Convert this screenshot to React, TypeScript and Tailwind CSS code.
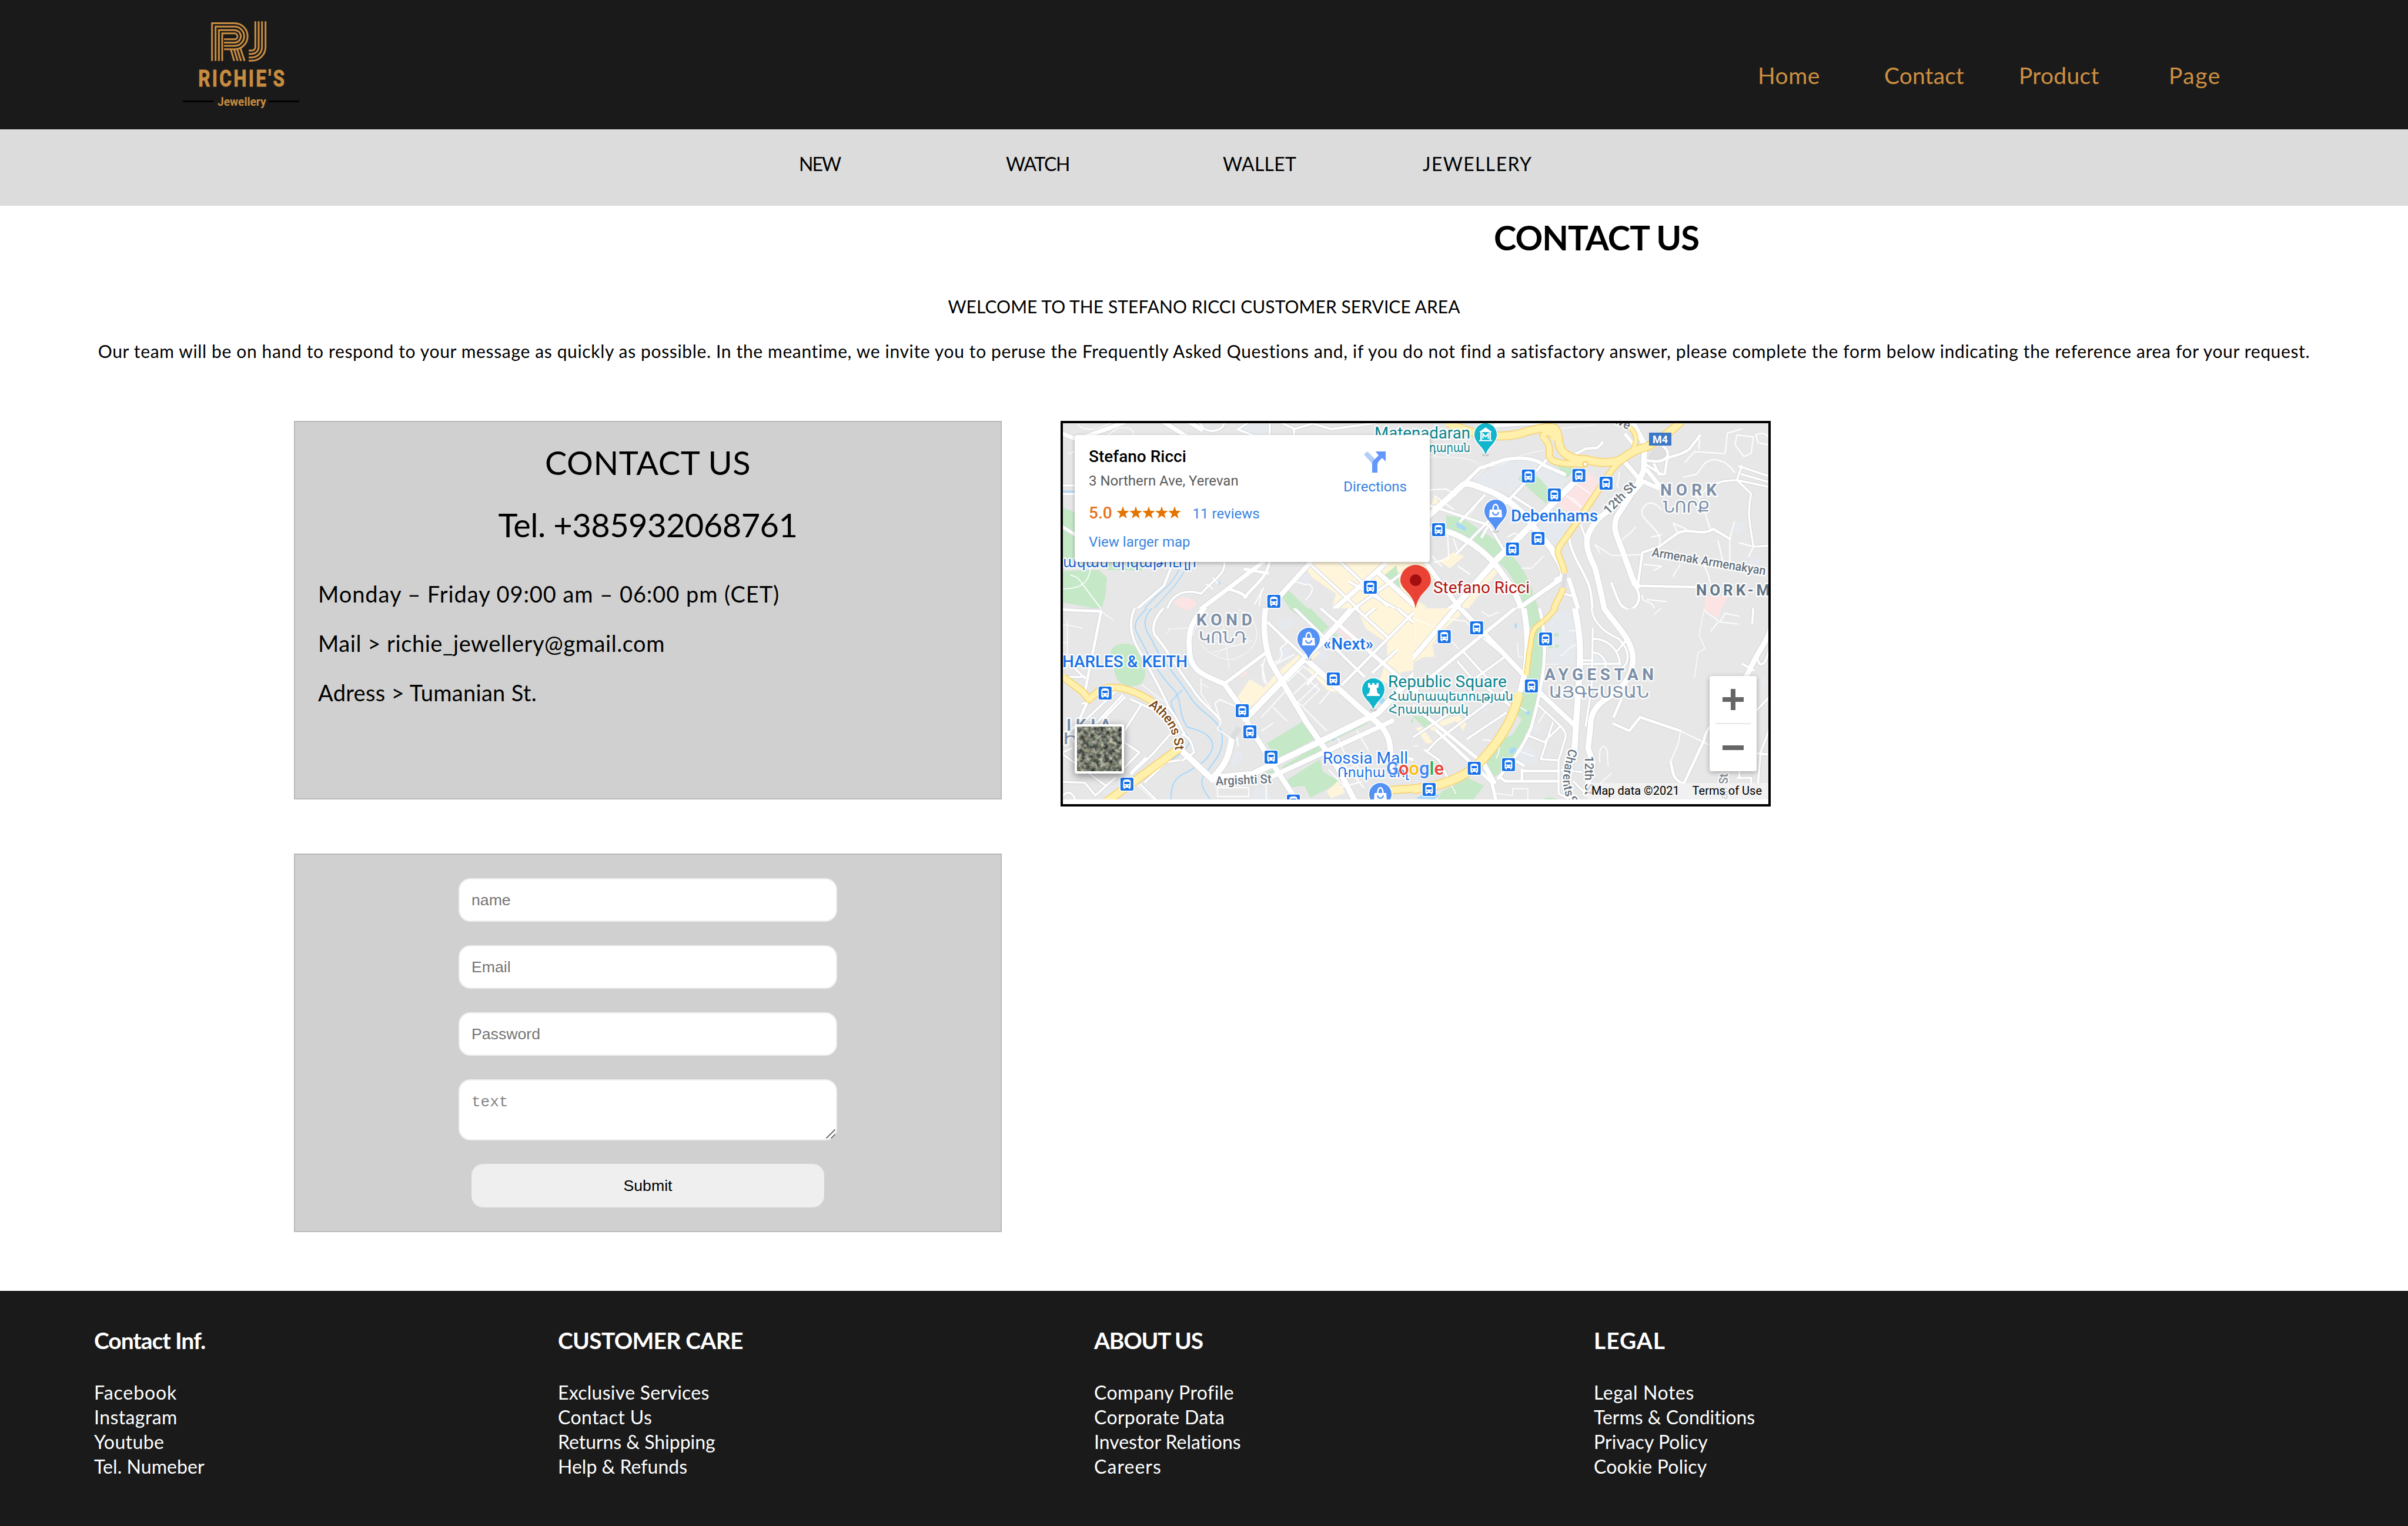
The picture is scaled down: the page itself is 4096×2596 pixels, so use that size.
import React from "react";

/* ---------- Brand ---------- */

function Logo() {
  return (
    <svg className="h-[220px] w-[260px] shrink-0" viewBox="0 0 780 660">
      <g fill="none" stroke="#c88c40" strokeWidth="9">
        <path d="M242,311 V118.500 H357 a66.500,66.500 0 0 1 0,133 H303" />
        <path d="M260,311 V136 H357 a49,49 0 0 1 0,98 H303" />
        <path d="M277,311 V153.500 H357 a32,32 0 0 1 0,64 H303" />
        <path d="M294,311 V170.500 H357 a15,15 0 0 1 0,30 H303" />
        <path d="M338,252 L355,311 M355,252 L373,311 M371,252 L390,311 M387,247 L408,311" />
        <path d="M463,109 V240 a18,18 0 0 1 -18,18 H429" />
        <path d="M480,109 V240 a35,35 0 0 1 -35,35 H429" />
        <path d="M497,109 V240 a53,53 0 0 1 -53,53 H429" />
        <path d="M515,109 V240 a70,70 0 0 1 -70,70 H429" />
      </g>
      <g stroke="#000" strokeWidth="8">
        <path d="M93,517 H250 M530,517 H687" />
      </g>
      <g fill="#c88c40" className="font-['Roboto',sans-serif] font-bold">
        <text x="172" y="442" fontSize="116" letterSpacing="12" textLength="450" lengthAdjust="spacingAndGlyphs" stroke="#c88c40" strokeWidth="3">RICHIE'S</text>
        <text x="270" y="541" fontSize="61" textLength="248" lengthAdjust="spacingAndGlyphs">Jewellery</text>
      </g>
    </svg>
  );
}

function Header() {
  return (
    <header className="flex h-[220px] bg-[#1a1a1a] pl-[280px]">
      <Logo />
      <nav className="ml-[2450px] flex pt-[104px] text-[39px] leading-[48px] text-[#cd8f41]">
        <a className="w-[215px] tracking-[0.45px]">Home</a>
        <a className="w-[229px] tracking-[0.1px]">Contact</a>
        <a className="w-[255px] tracking-[0.27px]">Product</a>
        <a className="tracking-[1.5px]">Page</a>
      </nav>
    </header>
  );
}

function CategoryBar() {
  return (
    <nav className="flex h-[130px] bg-[#dcdcdc] pt-[39px] pl-[1359px] text-[32px] leading-[40px]">
      <a className="w-[352px] tracking-[-2px]">NEW</a>
      <a className="w-[369px] tracking-[-1.35px]">WATCH</a>
      <a className="w-[340px] tracking-[0.25px]">WALLET</a>
      <a className="tracking-[1.36px]">JEWELLERY</a>
    </nav>
  );
}

/* ---------- Map ---------- */

type Quad = { origin: string; clip: [number, number, number, number]; at: (x: number, y: number) => [number, number] };

const KX1 = 620 / 1568;
const KX2 = 630 / 1568;
const NW: Quad = { origin: `matrix(${KX1} 0 0 0.33333 -18 -20)`, clip: [0, 0, 596, 315], at: (x, y) => [x * KX1 - 18, y / 3 - 20] };
const NE: Quad = { origin: `matrix(${KX2} 0 0 0.33333 592 -20)`, clip: [596, 0, 604, 315], at: (x, y) => [x * KX2 + 592, y / 3 - 20] };
const SW: Quad = { origin: `matrix(${KX1} 0 0 0.33333 -18 310)`, clip: [0, 315, 596, 325], at: (x, y) => [x * KX1 - 18, y / 3 + 310] };
const SE: Quad = { origin: `matrix(${KX2} 0 0 0.33333 592 310)`, clip: [596, 315, 604, 325], at: (x, y) => [x * KX2 + 592, y / 3 + 310] };

type Sheet = { q: Quad; areas: [string, string][]; water?: [string, number][]; roads: [string, number][]; highways: [string, number][] };

const GREEN = "#c5e8c6";
const SAND = "#fef5da";
const PINK = "#fce4e4";
const STEEL = "#e6eaee";
const POND = "#a6d8fc";

const sheets: Sheet[] = [
  {
    q: NW,
    areas: [
      [STEEL, "M840,60 H935 V120 H815 L800,92Z M620,70 L680,60 L670,100Z M1045,860 L1085,825 L1125,855 L1075,895Z"],
      [GREEN, "M46,490 L100,515 V700 L135,768 H46Z M46,815 L200,808 L235,850 L230,930 L212,1010 L46,975Z M230,768 H400 L385,812 L235,808Z"],
      [SAND, "M1130,768 H1568 V1020 H1200 L1220,930 L1120,850 L1090,800Z"],
      [GREEN, "M985,940 L1010,905 L1110,1020 H1030Z M1430,835 L1480,785 L1500,905Z"],
      [PINK, "M525,965 L560,948 L610,960 L622,990 L573,1012 L532,990Z"],
      [POND, "M710,875 L718,866 L723,878 L716,888Z"],
    ],
    water: [
      ["M545,805 C520,870 490,900 450,940 L385,1020 M575,800 C545,870 510,910 480,950 L425,1022", 1.6],
      ["M46,408 H100", 2.5],
    ],
    roads: [
      ["M110,62 C120,95 180,100 220,75 L250,60 M240,120 L280,85 C330,75 360,95 345,120 M70,215 L96,205 M46,905 C120,905 155,880 165,800", 1.4],
      ["M80,835 C90,840 105,845 110,850 L212,1010 M690,850 L715,880 M660,880 L690,905 M1010,895 C1060,840 1080,900 1100,880 C1130,890 1120,930 1090,960 M910,900 L870,985 M900,910 L890,990 M720,770 L750,760", 1.8],
      ["M635,60 L650,85 C680,110 730,100 740,60 M800,90 L840,60 M800,92 L860,120 M935,60 V120 M990,60 L1040,88 V120 M1040,90 L1120,62 L1200,90 L1390,60", 2.5],
      ["M46,378 H98 M46,422 H98 M46,1015 L212,1010 M740,770 C745,830 700,850 640,930 C600,915 520,900 490,1022", 2.5],
      ["M46,590 L100,630 M830,805 L925,825 M755,905 C800,920 825,930 830,950 C850,900 915,870 935,768", 3.5],
      ["M520,768 L480,890 L350,1022 M1110,780 L1330,1022 M1240,768 L1440,990 M1280,870 L1500,1022 M1500,830 L1280,1022", 3],
      ["M46,115 L110,145 M150,125 L305,58 M480,55 L575,125 M590,55 L640,90", 5],
      ["M905,770 L755,905 L625,1020", 5],
      ["M1110,770 L965,960 L920,1025 M1430,780 L1200,1022 M1400,820 L1568,1000", 5.5],
    ],
    highways: [],
  },
  {
    q: NE,
    areas: [
      [STEEL, "M270,345 L400,250 V400 H290Z M400,245 L540,240 L520,330 L410,420Z M560,240 L660,345 L620,430 L530,330Z M530,590 L650,520 L690,590 L600,690Z M410,450 L490,500 L450,540Z M1380,560 L1410,570 L1400,620 L1370,615Z M1440,740 L1480,750 L1470,790 L1430,780Z"],
      [GREEN, "M620,275 L700,290 L660,340Z M455,345 C460,315 500,315 540,335 L610,430 L570,470Z M150,530 L220,545 L400,690 L440,755 C490,810 510,900 545,1022 H482 C470,930 430,840 390,790 L350,750 L260,650 L150,600Z"],
      [POND, "M190,565 L230,588 L235,612 L195,590Z"],
      [PINK, "M625,470 L735,305 C790,320 800,370 785,410 L710,515 L640,500Z M1250,945 L1345,940 L1310,1022 H1243Z"],
      [SAND, "M185,715 L225,740 L165,800 L120,765Z M330,770 L380,800 L240,1010 L195,990Z M0,768 H60 L100,850 L60,900Z M0,950 L60,990 L80,1022 H0Z M100,430 L130,480 L80,500Z"],
      ["#dedede", "M1000,245 C1010,200 1050,160 1085,185 C1100,230 1060,275 1005,270Z"],
    ],
    roads: [
      ["M80,230 C150,240 250,220 300,280 C400,290 420,220 560,200 M620,90 C680,80 730,75 780,70 M270,340 L350,250 M310,430 L240,540", 1],
      ["M680,440 L720,480 M700,370 L760,420 M660,430 L720,490 M780,680 L850,735 L980,730 M780,680 L800,720 M950,590 C920,640 900,640 890,660 M560,740 L510,800 L470,800 M880,310 C890,340 860,370 880,390 M1120,820 L1140,780", 1.6],
      ["M80,400 L150,395 L190,430 M100,770 L160,750 L155,620 M410,640 L440,620 L470,650 M180,650 L200,720 M90,740 L130,790 M100,430 L180,500 M200,790 L250,830 M1030,1010 C1030,960 970,980 980,940 M1000,960 L1080,970 M1110,840 L1120,820", 2],
      ["M1160,260 L1200,205 L1330,215 L1340,110 L1400,90 M1220,130 V190 M1155,335 L1210,320 L1240,270 C1270,230 1330,240 1370,310 M1200,400 L1240,500 L1270,610 M1280,365 L1210,440 M1380,120 L1450,130 L1440,215 L1410,230 L1372,170Z M1460,120 C1490,100 1515,120 1515,140 M1460,120 L1470,160 L1515,170", 2],
      ["M980,500 C1000,450 1030,460 1060,500 M980,500 C960,560 1080,600 1050,690 M1130,620 L1110,570 L1165,600 M1350,650 L1370,560 M1240,780 L1260,840 L1280,940 M1350,650 L1350,790 M1020,640 L1060,630 M985,780 L1060,790 L1030,810 M1300,660 L1320,760 M1450,690 L1390,670 M1450,690 L1430,740", 2],
      ["M1380,350 L1440,420 C1420,530 1440,600 1450,690 L1515,685 M1390,280 L1515,330 M1380,350 L1515,385 M1380,350 L1400,280 M1280,380 C1310,350 1340,355 1380,350 M1400,320 L1515,360 M720,580 L750,680 M640,930 L680,940", 2.4],
      ["M1030,270 L1050,320 L1075,320 L1085,240 C1100,225 1150,225 1180,190 L1222,125 M1000,275 L1060,320 M1000,250 C1080,270 1110,220 1070,180 M700,215 L740,190 L790,185 L810,160", 3],
      ["M960,890 L980,720 L1050,690 L1130,620 C1180,590 1230,640 1280,600 L1350,650 M960,890 L1240,897 M940,880 C980,930 970,990 930,1010 C880,1010 875,950 850,880", 3],
      ["M310,430 L210,560 M80,480 L330,580 L390,700 M330,580 L300,640 M580,240 L400,470 L190,730 M670,600 C660,700 720,790 740,850 C770,910 765,1000 770,1022 M430,430 L520,500", 3],
      ["M235,355 L290,290 L400,245 C470,230 530,240 565,275 L650,320 M910,120 L950,180", 4],
      ["M360,70 L560,55 M60,768 L210,1010 M450,1010 L640,850", 5],
      ["M670,860 L712,1022 M1000,300 L1060,390 M900,250 L970,350 L1045,390", 5],
      ["M0,615 L210,385 C230,350 280,380 340,410 C420,450 480,520 520,590 L595,700 C620,760 655,800 640,850 L620,860", 7],
      ["M700,350 L360,760 L195,985 L150,1022", 7],
      ["M80,600 C180,600 280,680 350,770 C400,850 450,920 470,1022", 6.5],
      ["M940,60 L990,170 L985,300 L960,370 L870,540 C850,610 880,650 910,760 C930,820 940,880 960,890 M970,370 L940,410 L800,540 C720,640 740,700 780,800 C800,900 820,1000 820,1022", 6.5],
    ],
    highways: [
      ["M880,60 C930,70 960,110 950,160 C945,190 935,210 900,240", 4],
      ["M560,130 C555,100 600,100 605,135 M560,130 C580,160 590,170 585,220 C590,265 640,268 735,268", 6],
      ["M160,60 C200,85 240,100 300,120 C380,130 430,125 470,110 C520,90 600,70 612,90 C630,120 620,170 640,200 C670,240 700,245 740,245 C800,265 850,265 890,245 C930,210 960,190 1000,180 C1060,140 1110,90 1145,50", 8],
      ["M895,245 C850,290 840,320 800,390 C740,500 690,590 640,670 C600,730 640,740 650,825", 5.5],
      ["M645,900 C640,930 610,980 600,1022", 5.5],
    ],
  },
  {
    q: SW,
    areas: [
      [STEEL, "M970,80 L1030,60 L1040,100 L980,130Z M975,230 L1020,210 L1020,260 L970,270Z M1110,230 L1170,220 L1195,270 L1160,290Z M215,950 L290,900 L300,960 L240,990Z M870,940 L920,920 L940,990 H865Z M780,750 L825,740 L815,790 L770,830Z"],
      [GREEN, "M250,240 C260,180 360,180 372,240 C405,300 410,370 380,400 C330,430 280,400 270,350Z M1000,0 H1100 L1190,110 L1160,140Z M920,705 L1080,590 L1128,680 L972,785Z M1160,680 L1340,585 L1358,602 L1178,705Z M985,825 L1140,715 L1158,735 L1000,838Z M1010,890 L1150,785 L1165,850 L1240,900 L1110,982 L1085,920 L1010,930Z M46,0 H210 V8 H46Z M1180,130 L1230,150 L1190,190Z M920,850 L950,838 L955,855 L930,868Z M1540,590 L1568,560 V620Z"],
      [SAND, "M1310,20 L1500,-20 H1568 V330 L1500,340 L1440,300 V190 L1350,120Z M850,375 L910,420 L960,350 L1060,250 L1075,290 L880,500 L810,540 L790,480Z M1110,310 L1230,450 L1180,430 L1100,320Z M1180,950 L1230,895 L1260,955 L1200,985Z M1120,210 L1150,240 L1110,290Z M1430,300 L1500,340 L1480,420 L1410,380Z"],
      [PINK, "M525,-20 H620 V10 L575,25Z M1210,110 L1240,92 L1312,150 L1270,175Z M805,355 L830,330 L842,345 L815,370Z"],
      [POND, "M1422,470 L1450,510 L1430,535 L1405,490Z M1200,680 L1212,668 L1218,680 L1208,694Z"],
    ],
    water: [
      ["M425,-10 C380,50 345,80 360,130 C400,220 440,330 530,440 C560,500 540,550 580,620 C640,640 690,660 690,720 C680,790 620,820 580,850 C520,880 510,920 510,995 M450,-10 C380,60 390,110 430,180 C470,290 540,360 600,480 C640,550 720,580 730,660 C740,760 690,800 650,870 C630,920 660,950 680,995 M510,490 L560,430 M510,490 C520,550 570,650 590,680 C590,760 480,800 440,840 L360,910", 2],
      ["M1225,670 L1330,605", 2],
    ],
    roads: [
      ["M620,100 L600,160 M640,200 C680,260 760,290 790,270 C850,240 880,200 880,140 C870,60 830,30 800,20 M735,90 L760,320 M690,240 L860,180 M690,150 C700,200 760,220 840,190 M500,120 L590,115 M490,145 L505,118 M740,220 L700,260", 1],
      ["M46,190 H66 M68,100 L130,115 M65,80 V310 M46,100 H70 M210,30 L262,75 M385,405 L480,490 M435,990 L360,910 M640,370 V450 L680,520 M640,400 L672,420", 1.4],
      ["M1000,420 L1040,500 M1050,330 L1150,430 M1010,390 L1080,310 L1170,400 M1040,450 L1120,360 M1060,490 L1140,400 M1075,515 L1150,430 M1000,430 L1075,515 M1150,500 L1200,430 L1240,430 M900,570 L1000,440 M950,520 L1010,590 M1080,520 L1180,640 M900,640 L950,600 M920,880 V990 M710,930 H845 V975 H710Z M1310,640 L1360,740 M1230,680 L1270,790", 1.8],
      ["M1190,840 L1310,990 M1240,790 L1340,930 M1330,900 L1240,930 M1260,840 L1310,815 L1350,900 M800,520 L720,480 L700,500 L725,600 L710,630 L770,680 M800,720 L790,640 M930,90 L1010,190 L980,220 C1000,260 980,290 940,290 M960,300 L1040,250 M900,300 L920,400 M915,270 C900,320 900,380 920,400", 2],
      ["M46,265 L140,370 M64,365 H140 M46,750 L80,730 M130,500 L170,490 M46,900 L140,905 L185,970 L270,880 M46,760 L230,920 M380,915 L450,995 M46,970 C70,940 90,960 100,995", 2.4],
      ["M270,440 L130,600 M300,460 L150,650 M310,470 L220,580 M340,480 L430,530 L500,580 M380,510 L310,640 V700 C340,720 360,740 375,750 L300,840 M520,640 L430,760 L340,860 M545,790 L490,800 L400,900 M230,640 L310,700 M560,660 C590,670 600,700 610,750 L560,790 M400,780 L340,850", 2.6],
      ["M1130,-10 L1568,440 M1020,-10 L1340,360 M1230,100 L1568,450 M1250,400 L1568,20 M1310,20 L1440,160 M1350,50 L1400,0 M1470,0 L1568,100 M930,90 L1110,290 M1380,340 L1480,230 M1100,400 L1150,330", 3.2],
      ["M46,22 L210,30 L140,440 M155,480 L110,600 L60,660", 3.2],
      ["M370,-10 C330,40 330,130 360,200 C420,330 470,430 500,520 C540,580 550,620 570,660 M500,-10 C430,60 430,120 440,150 C500,230 540,330 600,420 C640,500 680,520 720,580", 2.8],
      ["M740,400 L915,245 M1455,760 L1568,790", 4],
      ["M950,870 L1460,590", 5.5],
      ["M670,-5 C610,60 580,120 590,220 C590,330 640,350 740,400 L800,500 L850,620 L960,830 L1050,995", 6],
      ["M920,-5 C905,80 910,200 940,290 L1090,590 L1160,710 L1220,810 L1300,995 M1100,285 L1330,530 L1400,600 C1440,640 1455,690 1455,760 V840", 6.5],
      ["M1310,-10 L1180,160 L960,420 L830,580 M770,690 C760,760 750,810 690,880 M555,740 L690,890 M680,880 L860,860 L1160,690 L1400,550 L1568,340", 7],
    ],
    highways: [
      ["M1370,975 C1440,930 1500,945 1580,930", 7.5],
      ["M46,365 L130,440 L158,480 L205,430 C270,400 350,430 430,490", 6.5],
      ["M545,730 L350,900 L235,1000", 8],
    ],
  },
  {
    q: SE,
    areas: [
      [STEEL, "M590,50 L650,25 L700,50 L690,300 H600 L580,200Z M770,250 L800,250 L825,280 L790,310Z M500,600 L550,610 L545,650 L510,640Z M480,690 L540,770 L530,810 L450,800Z M300,490 L330,520 L315,550Z M150,340 L200,330 L195,380Z M690,810 L725,800 V840 L700,850Z M1480,360 L1505,370 L1500,410 L1475,400Z M0,880 H30 V920 H0Z"],
      [GREEN, "M480,-10 H545 L560,80 L570,200 C560,330 540,500 500,620 C470,700 430,790 370,860 L340,890 L300,780 L380,680 L430,660 L470,580 L450,560 L480,400 L505,250 L510,130Z M240,880 L310,920 L260,995 H110 L130,950Z M0,560 L60,570 L95,600 L60,625Z M607,142 H625 V158 H607Z M580,205 H600 V218 H580Z M610,200 H627 V214 H610Z M560,990 C570,975 610,975 625,995Z"],
      [POND, "M487,548 a9,10 0 1 0 18,0 a9,10 0 1 0 -18,0Z M420,730 L440,722 L445,740 L425,760 L416,750Z M20,985 L60,960 L120,965 L100,990Z M440,92 H448 V114 H440Z M76,195 a6,7 0 1 0 12,0 a6,7 0 1 0 -12,0Z"],
      [PINK, "M1245,-10 H1325 L1300,65 L1245,25Z"],
      [SAND, "M0,-10 H90 L205,30 L210,50 L130,130 L90,200 L100,260 L50,265 L0,300Z M70,610 L200,560 L235,600 L222,640 L190,590 L90,640Z M20,625 L45,620 L95,700 L65,705Z"],
    ],
    roads: [
      ["M0,180 H20 V100 M0,60 L100,110 M1245,0 L1220,150 L1245,220 L1215,240 L1200,370 M890,10 L920,20 M450,190 L455,260 L475,265 M670,130 L700,128 M630,255 C660,255 650,220 700,200 M570,300 H620", 1.2],
      ["M120,120 L160,70 L230,80 L270,130 M300,30 L330,55 L370,35 M100,190 L170,180 L200,220 M360,960 L430,970 L430,935 H495 V995 M305,685 C370,690 390,720 360,780 M800,800 C790,700 830,700 832,760 L835,820 M850,855 L800,910 M1030,45 L1058,15 M450,510 L490,540 M450,740 L520,770 M540,600 L570,540 M0,720 L30,715 M150,870 L190,960", 1.6],
      ["M1245,30 L1310,85 L1385,95 M1310,80 L1330,40 L1390,55 M1270,130 L1300,85 M1140,640 L1260,710 M1140,650 C1130,740 1110,750 1100,800", 1.8],
      ["M490,660 L570,700 M540,510 C600,580 660,630 655,670 L625,790 L550,785 L600,600 M570,690 L630,620 M625,790 V960 L680,995 M690,900 L740,960 M640,840 L720,850", 2.4],
      ["M70,740 L110,690 L400,430 M240,680 L400,550 M60,740 L120,790 L155,880 M225,240 L330,380 M0,450 L60,400 M310,170 L400,260 L240,400 M200,290 L250,360 M320,420 L440,530 M0,680 L200,520 M1465,250 C1470,330 1500,310 1515,230 M1405,300 L1450,330 M1450,-5 L1445,90 M1515,470 L1460,540 M1515,640 L1480,750 L1470,900 M1470,755 L1515,760 M1385,880 H1440 V910 M1390,850 V880", 2.6],
      ["M765,-5 C760,60 800,130 880,170 C930,230 930,300 880,330 M770,120 L765,420 L740,610 M770,170 C830,170 880,220 885,300 M770,240 C800,240 825,270 825,310 M725,280 H770 M725,298 H885 M910,180 L875,230", 2.4],
      ["M890,480 L860,565 M860,605 L925,640 L970,570 L1140,640 M1100,800 C1110,860 1110,890 1155,910 L1240,690 C1250,620 1290,590 1350,500 M470,845 H625 M380,880 L400,897 H625 M470,840 V895 M440,790 L475,815", 3.2],
      ["M460,-5 L90,360 M0,500 L300,800 M110,640 L340,900 M340,890 L360,995 M0,410 L50,470", 4],
      ["M1350,500 L1430,340 C1460,250 1500,200 1520,130", 6],
      ["M190,-10 L380,230 L470,345 M0,280 L205,-10 M550,450 L700,620 M300,790 L350,900", 5.5],
      ["M475,-5 C490,100 500,200 485,330 L465,430", 6.5],
      ["M540,-5 C590,200 560,400 510,620 C480,710 430,800 370,880", 3.6],
      ["M690,-5 C720,150 720,250 710,400 L692,740", 7],
      ["M810,-5 C830,60 940,160 940,270 C940,350 910,400 850,460 C790,500 760,540 760,620 L750,730 L770,800 L740,960", 6.5],
    ],
    highways: [
      ["M620,-10 C600,50 560,80 530,110 C505,140 510,200 500,240 L490,350", 4.5],
      ["M455,460 C440,540 400,660 300,790 C230,880 120,930 -20,940", 9],
    ],
  },
];

function Terrain() {
  return (
    <>
      {sheets.map(({ q, areas, water, roads, highways }, i) => (
        <g key={i}>
          <clipPath id={`sheet-${i}`}>
            <rect x={q.clip[0]} y={q.clip[1]} width={q.clip[2]} height={q.clip[3]} />
          </clipPath>
          <g clipPath={`url(#sheet-${i})`}>
            <g transform={q.origin}>
              {areas.map(([fill, d], k) => <path key={k} d={d} fill={fill} />)}
              <g fill="none" strokeLinejoin="round">
                {water?.map(([d, w], k) => <path key={k} d={d} stroke={POND} strokeWidth={w} vectorEffect="non-scaling-stroke" />)}
                {roads.map(([d, w], k) => w > 2 && <path key={k} d={d} stroke="#d3d5da" strokeWidth={w * 1.5 + 2} vectorEffect="non-scaling-stroke" />)}
                {roads.map(([d, w], k) => <path key={k} d={d} stroke="#fff" strokeWidth={w > 2 ? w * 1.5 : w} strokeLinecap="round" vectorEffect="non-scaling-stroke" />)}
                {highways.map(([d, w], k) => <path key={k} d={d} stroke="#f8d06c" strokeWidth={w * 1.5 + 3} vectorEffect="non-scaling-stroke" />)}
                {highways.map(([d, w], k) => <path key={k} d={d} stroke="#fff0ac" strokeWidth={w * 1.5} strokeLinecap="round" vectorEffect="non-scaling-stroke" />)}
              </g>
            </g>
          </g>
        </g>
      ))}
      <circle cx="888.500" cy="69.500" r="4" fill="#fff" stroke="#f8d06c" strokeWidth="2.500" />
      <path d="M300,518 L288,536" stroke="#dcdde0" strokeWidth="10" />
      <path d="M853.500,255 L851,280" stroke="#dcdde0" strokeWidth="7" />
    </>
  );
}

const stops: [number, number][] = [
  NW.at(953, 969), NW.at(1368, 897),
  NE.at(117, 603), NE.at(497, 329), NE.at(607, 426), NE.at(711, 326), NE.at(826, 366), NE.at(538, 648), NE.at(430, 702),
  SW.at(227, 447), SW.at(817, 537), SW.at(850, 645), SW.at(941, 774), SW.at(321, 912), SW.at(1209, 375), SW.at(1037, 998),
  SE.at(141, 159), SE.at(278, 114), SE.at(570, 171), SE.at(510, 411), SE.at(268, 831), SE.at(413, 812), SE.at(77, 939),
];

function BusStop({ x, y }: { x: number; y: number }) {
  return (
    <g transform={`translate(${x - 11} ${y - 11})`}>
      <rect x="-1.500" y="-1.500" width="25" height="25" rx="4" fill="#fff" />
      <rect width="22" height="22" rx="2.500" fill="#1a73e8" />
      <path d="M4.500,17 V6.500 C4.500,3.500 8,3 11,3 S17.500,3.500 17.500,6.500 V17 H16.500 V19 H14 V17 H8 V19 H5.500 V17Z" fill="#fff" />
      <path d="M6.500,7 H15.500 V11 H6.500Z" fill="#1a73e8" />
      <circle cx="7.800" cy="14" r="1.100" fill="#1a73e8" />
      <circle cx="14.200" cy="14" r="1.100" fill="#1a73e8" />
    </g>
  );
}

function PlacePin({ x, y, color, children }: { x: number; y: number; color: string; children: React.ReactNode }) {
  return (
    <g transform={`translate(${x} ${y})`}>
      <ellipse cy="54" rx="6" ry="2" fill="#000" opacity="0.15" />
      <path d="M0,54 C-3,40 -19,34 -19,19 A19,19 0 0 1 19,19 C19,34 3,40 0,54Z" fill={color} stroke="#fff" strokeWidth="3" paintOrder="stroke" />
      {children}
    </g>
  );
}

function ShopPin({ x, y }: { x: number; y: number }) {
  return (
    <PlacePin x={x} y={y} color="#5491f5">
      <path d="M-10,17 H10 L11,30 H-11Z" fill="#fff" />
      <path d="M-4.500,17 C-4.500,5 4.500,5 4.500,17" fill="none" stroke="#fff" strokeWidth="2.500" />
      <path d="M-5,21 C-4,27.500 4,27.500 5,21" fill="none" stroke="#5491f5" strokeWidth="2.200" />
    </PlacePin>
  );
}

type Label = { t: string; x: number; y: number; w: number; s: number; c: string; b?: number; r?: number; o?: number };

const BLUE = "#1a73e8";
const TEAL = "#0c8590";
const SLATE = "#7c8fa8";
const STREET = "#66727e";

const labels: Label[] = [
  { t: "Matenadaran", x: 530, y: 26, w: 163, s: 28, c: TEAL },
  { t: "Մատենադարան", x: 533, y: 49, w: 160, s: 21, c: TEAL },
  { t: "gyan Ave", x: 888, y: -26, w: 82, s: 21, c: STREET, b: 500, r: 27 },
  { t: "NORK", x: 1016, y: 123, w: 96, s: 28, c: SLATE, b: 700 },
  { t: "ՆՈՐՔ", x: 1021, y: 152, w: 79, s: 26, c: SLATE },
  { t: "12th St", x: 928, y: 156, w: 68, s: 21, c: STREET, b: 500, r: -45 },
  { t: "Armenak Armenakyan", x: 1001, y: 226, w: 196, s: 21, c: STREET, b: 500, r: 9.5 },
  { t: "NORK-MARASH", x: 1077, y: 293, w: 236, s: 26, c: "#637689", b: 700 },
  { t: "Debenhams", x: 762, y: 167, w: 148, s: 28, c: BLUE, b: 500 },
  { t: "Stefano Ricci", x: 630, y: 289, w: 164, s: 28, c: "#b31412" },
  { t: "ական երկաթուղի", x: 0, y: 245, w: 227, s: 24, c: "#1967d2" },
  { t: "HARLES & KEITH", x: -1, y: 415, w: 213, s: 28, c: BLUE, b: 500 },
  { t: "KOND", x: 227, y: 344, w: 95, s: 28, c: SLATE, b: 700 },
  { t: "ԿՈՆԴ", x: 231, y: 374, w: 82, s: 26, c: SLATE },
  { t: "«Next»", x: 443, y: 385, w: 85, s: 28, c: BLUE, b: 500 },
  { t: "Republic Square", x: 553, y: 449, w: 202, s: 28, c: TEAL },
  { t: "Հանրապետության", x: 554, y: 472, w: 212, s: 21, c: TEAL },
  { t: "Հրապարակ", x: 554, y: 494, w: 136, s: 21, c: TEAL },
  { t: "AYGESTAN", x: 819, y: 437, w: 186, s: 28, c: SLATE, b: 700 },
  { t: "ԱՅԳԵՍՏԱՆ", x: 827, y: 467, w: 170, s: 26, c: SLATE },
  { t: "Rossia Mall", x: 442, y: 579, w: 145, s: 28, c: BLUE },
  { t: "Ռոսիա մոլ", x: 467, y: 602, w: 121, s: 23, c: BLUE },
  { t: "Argishti St", x: 260, y: 616, w: 95, s: 21, c: STREET, b: 500, r: -2.5 },
  { t: "IKIA", x: 6, y: 523, w: 76, s: 28, c: SLATE, b: 700 },
  { t: "ԿԻԱ", x: -26, y: 546, w: 78, s: 26, c: SLATE },
  { t: "12th St", x: 888, y: 566, w: 66, s: 20, c: STREET, b: 500, r: 90 },
  { t: "an St", x: 1131, y: 640, w: 44, s: 20, c: STREET, b: 500, r: -90, o: 0.8 },
];

function Labels() {
  return (
    <g stroke="#fff" strokeWidth="5" strokeLinejoin="round" paintOrder="stroke" className="font-['Roboto','DejaVu_Sans',sans-serif]">
      {labels.map(({ t, x, y, w, s, c, b, r, o }) => (
        <text key={t + x} transform={`translate(${x} ${y}) rotate(${r ?? 0})`} textLength={w} lengthAdjust={b === 700 ? "spacing" : "spacingAndGlyphs"} fontSize={s} fontWeight={b ?? 400} fill={c} opacity={o ?? 1} strokeOpacity="0.85">{t}</text>
      ))}
      <path id="athens" d="M145,481 C170,498 190,520 191,558" fill="none" stroke="none" />
      <text fontSize="22" fontWeight="500" fill="#7a4510"><textPath href="#athens" textLength="92">Athens St</textPath></text>
      <path id="charents" d="M861,553 C852,585 848,605 853,625 C856,640 862,648 875,660" fill="none" stroke="none" />
      <text fontSize="21" fontWeight="500" fill={STREET}><textPath href="#charents">Charents St</textPath></text>
    </g>
  );
}

function Map() {
  return (
    <svg className="block h-[640px] w-[1200px] bg-[#e7e7e7]" viewBox="0 0 1200 640">
      <Terrain />
      <path d="M997,16 H1035 V38 H997Z" fill="#3c78c6" />
      <text x="1003" y="34" fontSize="19" fill="#fff" textLength="26" lengthAdjust="spacingAndGlyphs" className="font-['Roboto',sans-serif] font-bold">M4</text>
      <Labels />
      {stops.map(([x, y]) => <BusStop key={`${x}-${y}`} x={x} y={y} />)}
      <PlacePin x={719} y={0} color="#12b5cb">
        <path d="M-11,15 L0,7 L11,15Z M-9,15 H-6.500 V29 H-9Z M9,15 H6.500 V29 H9Z M-11,28.500 H11 V30.500 H-11Z" fill="#fff" />
        <path d="M-4.500,26 V18 L0,23 L4.500,18 V26" fill="none" stroke="#fff" strokeWidth="2.200" />
      </PlacePin>
      <ShopPin x={736} y={130} />
      <ShopPin x={418} y={348} />
      <ShopPin x={540} y={612} />
      <PlacePin x={528} y={434} color="#12b5cb">
        <path d="M-9,8 H-5.500 V11 H-2 V8 H2 V11 H5.500 V8 H9 V15 L5.500,17 L7,25 L11,27.500 V30 H-11 V27.500 L-7,25 L-5.500,17 L-9,15Z" fill="#fff" />
      </PlacePin>
      <path d="M600,315 C596,288 574,283 574,267 A26,26 0 0 1 626,267 C626,283 604,288 600,315Z" fill="#ea4335" />
      <circle cx="600" cy="267" r="10" fill="#a50e0e" />
      <text x="550" y="598" fontSize="31" fontWeight="500" stroke="#fff" strokeWidth="3" strokeOpacity="0.7" paintOrder="stroke" textLength="98" lengthAdjust="spacingAndGlyphs" className="font-['Roboto',sans-serif]">
        <tspan fill="#4285f4">G</tspan><tspan fill="#ea4335">o</tspan><tspan fill="#fbbc05">o</tspan><tspan fill="#4285f4">g</tspan><tspan fill="#34a853">l</tspan><tspan fill="#ea4335">e</tspan>
      </text>
    </svg>
  );
}

function Star() {
  return (
    <svg className="h-[22px] w-[22px]" viewBox="0 0 22 22">
      <path d="M11,0.500 L13.700,8 L21.800,8.200 L15.400,13 L17.700,21 L11,16.300 L4.300,21 L6.600,13 L0.200,8.200 L8.300,8Z" fill="#e37400" />
    </svg>
  );
}

function PlaceCard() {
  return (
    <div className="absolute top-[20px] left-[20px] flex h-[216px] w-[604px] justify-between rounded-[4px] bg-white px-6 shadow-[0_2px_6px_rgba(0,0,0,0.3)]">
      <div className="pt-[20px]">
        <div className="text-[28px] leading-[34px] font-medium text-black">Stefano Ricci</div>
        <div className="mt-[10px] text-[24px] leading-[28px] text-[#5b5b5b]">3 Northern Ave, Yerevan</div>
        <div className="mt-[24px] flex h-[34px] items-center">
          <span className="text-[28px] leading-[34px] font-medium text-[#e7711b]">5.0</span>
          <span className="mb-[2px] ml-[7px] flex">
            <Star /><Star /><Star /><Star /><Star />
          </span>
          <span className="mt-[2px] ml-[20px] text-[24px] leading-[28px] text-[#3a84df]">11 reviews</span>
        </div>
        <div className="mt-[18px] text-[24px] leading-[28px] text-[#3a84df]">View larger map</div>
      </div>
      <div className="flex flex-col items-center pt-[26px] pr-[15px]">
        <svg className="h-[40px] w-[38px]" viewBox="0 0 38 40">
          <path d="M0,7 L6,2 L19,15 L15,24Z" fill="#b3cdfb" />
          <path d="M14,38 V23 C14,18 20,14 25,9 L20,2 H37 V19 L31,13 C27,17 23,20 23,25 V38Z" fill="#6596fb" />
        </svg>
        <div className="mt-[8px] text-[24px] leading-[28px] text-[#3a84df]">Directions</div>
      </div>
    </div>
  );
}

function SatelliteToggle() {
  return (
    <div className="absolute top-[512px] left-[20px] h-[84px] w-[84px] rounded-[4px] border-4 border-white bg-[#6f756e] shadow-[0_4px_14px_rgba(0,0,0,0.45)]">
      <svg className="h-full w-full" viewBox="0 0 76 76">
        <filter id="ground" x="0" y="0" width="100%" height="100%" colorInterpolationFilters="sRGB">
          <feTurbulence type="fractalNoise" baseFrequency="0.13" numOctaves="4" seed="7" />
          <feColorMatrix values="1.1 0 0 0 -0.09  1.050 0.100 0 0 -0.1  0.950 0 0.100 0 -0.1  0 0 0 0 1" />
        </filter>
        <rect width="76" height="76" filter="url(#ground)" />
      </svg>
    </div>
  );
}

function ZoomControl() {
  return (
    <div className="absolute top-[430px] left-[1100px] flex h-[162px] w-[80px] flex-col items-center rounded-[4px] bg-white shadow-[0_2px_8px_rgba(0,0,0,0.3)]">
      <svg className="h-[80px] w-[36px]" viewBox="0 0 36 80">
        <path d="M0,36 H14 V22 H22 V36 H36 V44 H22 V58 H14 V44 H0Z" fill="#666" />
      </svg>
      <div className="h-[2px] w-[60px] bg-[#e6e6e6]" />
      <svg className="h-[80px] w-[36px]" viewBox="0 0 36 80">
        <path d="M0,36 H36 V44 H0Z" fill="#666" />
      </svg>
    </div>
  );
}

function MapPanel() {
  return (
    <div className="relative h-[656px] w-[1208px] overflow-hidden border-4 border-black font-['Roboto',sans-serif]">
      <Map />
      <PlaceCard />
      <SatelliteToggle />
      <ZoomControl />
      <div className="absolute top-[612px] left-[892px] flex h-[28px] w-[308px] justify-between bg-[#f5f5f5]/70 pr-[11px] pl-[7px] text-[20px] leading-[27px] text-black">
        <span className="tracking-[0px]">Map data ©2021</span>
        <span className="tracking-[0px]">Terms of Use</span>
      </div>
    </div>
  );
}

/* ---------- Contact details and form ---------- */

function ContactCard() {
  return (
    <section className="h-[644px] w-[1204px] border-2 border-[#b9b9b9] bg-[#d0d0d0] px-[39px] pt-[35px]">
      <h2 className="text-center text-[56px] leading-[68px] tracking-[0.53px]">CONTACT US</h2>
      <p className="mt-[38px] text-center text-[56px] leading-[68px] tracking-[-0.55px]">Tel. +385932068761</p>
      <div className="mt-[61px] flex flex-col gap-[40px] text-[38px] leading-[44px]">
        <p className="tracking-[0.95px]">Monday – Friday 09:00 am – 06:00 pm (CET)</p>
        <p className="tracking-[0.56px]">Mail &gt; richie_jewellery@gmail.com</p>
        <p className="tracking-[0.32px]">Adress &gt; Tumanian St.</p>
      </div>
    </section>
  );
}

const inputClass =
  "h-[74px] w-[644px] rounded-[20px] border-2 border-[#eee] bg-white px-[20px] font-['Liberation_Sans',sans-serif] text-[26.67px] text-black placeholder:text-[#757575] placeholder:opacity-100";

function ContactForm() {
  return (
    <form className="flex h-[644px] w-[1204px] flex-col items-center gap-[40px] border-2 border-[#b9b9b9] bg-[#d0d0d0] pt-[40px]">
      <input className={inputClass} placeholder="name" />
      <input className={inputClass} placeholder="Email" />
      <input className={inputClass} placeholder="Password" />
      <div className="relative h-[104px] w-[644px]">
        <textarea
          className="block h-[104px] w-[644px] resize-none overflow-hidden rounded-[20px] border-2 border-[#eee] bg-white px-[20px] pt-[22px] font-['Liberation_Mono',monospace] text-[26px] leading-[30px] placeholder:text-[#858585] placeholder:opacity-100"
          placeholder="text"
        />
        <svg className="absolute right-[3px] bottom-[3px] h-[16px] w-[16px]" viewBox="0 0 16 16">
          <path d="M0.500,15.500 L15.500,0.500 M8.500,15.500 L15.500,8.500" stroke="#555" strokeWidth="1.600" />
        </svg>
      </div>
      <button className="h-[74px] w-[600px] rounded-[20px] bg-[#efefef] font-['Liberation_Sans',sans-serif] text-[26.67px] text-black">Submit</button>
    </form>
  );
}

/* ---------- Footer ---------- */

type Column = { width: string; title: string; tracking: string; links: [string, string][] };

const columns: Column[] = [
  {
    width: "w-[789px]", title: "Contact Inf.", tracking: "tracking-[-1.06px]",
    links: [["Facebook", "tracking-[0.88px]"], ["Instagram", "tracking-[0.41px]"], ["Youtube", "tracking-[0.39px]"], ["Tel. Numeber", "tracking-[0.07px]"]],
  },
  {
    width: "w-[912px]", title: "CUSTOMER CARE", tracking: "tracking-[-0.74px]",
    links: [["Exclusive Services", "tracking-[0.27px]"], ["Contact Us", "tracking-[0.45px]"], ["Returns & Shipping", "tracking-[-0.04px]"], ["Help & Refunds", "tracking-[0.01px]"]],
  },
  {
    width: "w-[850px]", title: "ABOUT US", tracking: "tracking-[-1.3px]",
    links: [["Company Profile", "tracking-[0.42px]"], ["Corporate Data", "tracking-[0.34px]"], ["Investor Relations", "tracking-[-0.02px]"], ["Careers", "tracking-[1.06px]"]],
  },
  {
    width: "w-[600px]", title: "LEGAL", tracking: "tracking-[0.9px]",
    links: [["Legal Notes", "tracking-[0.6px]"], ["Terms & Conditions", "tracking-[-0.02px]"], ["Privacy Policy", "tracking-[0.05px]"], ["Cookie Policy", "tracking-[0.2px]"]],
  },
];

function Footer() {
  return (
    <footer className="flex h-[400px] bg-[#1a1a1a] pt-[60px] pl-[160px] text-white">
      {columns.map((col) => (
        <div key={col.title} className={col.width}>
          <h3 className={`text-[39px] leading-[48px] font-bold ${col.tracking}`}>{col.title}</h3>
          <ul className="mt-[44px] text-[32px] leading-[42px]">
            {col.links.map(([text, tracking]) => <li key={text} className={tracking}>{text}</li>)}
          </ul>
        </div>
      ))}
    </footer>
  );
}

export default function App() {
  return (
    <div className="flex h-[2596px] w-[4096px] flex-col overflow-hidden bg-white font-['Lato',sans-serif] text-black">
      <Header />
      <CategoryBar />
      <main className="flex grow flex-col">
        <h1 className="mt-[24px] pl-[2541px] text-[58px] leading-[60px] font-bold tracking-[-1px]">CONTACT US</h1>
        <p className="mt-[69px] text-center text-[30px] leading-[36px] tracking-[0.06px]">WELCOME TO THE STEFANO RICCI CUSTOMER SERVICE AREA</p>
        <p className="mt-[40px] text-center text-[30px] leading-[36px] tracking-[0.64px] whitespace-nowrap">
          Our team will be on hand to respond to your message as quickly as possible. In the meantime, we invite you to peruse the Frequently Asked Questions and, if you do not find a satisfactory answer, please complete the form below indicating the reference area for your request.
        </p>
        <div className="mt-[101px] grid grid-cols-[1204px_1208px] items-start gap-x-[100px] gap-y-[80px] pl-[500px]">
          <ContactCard />
          <MapPanel />
          <ContactForm />
        </div>
      </main>
      <Footer />
    </div>
  );
}
